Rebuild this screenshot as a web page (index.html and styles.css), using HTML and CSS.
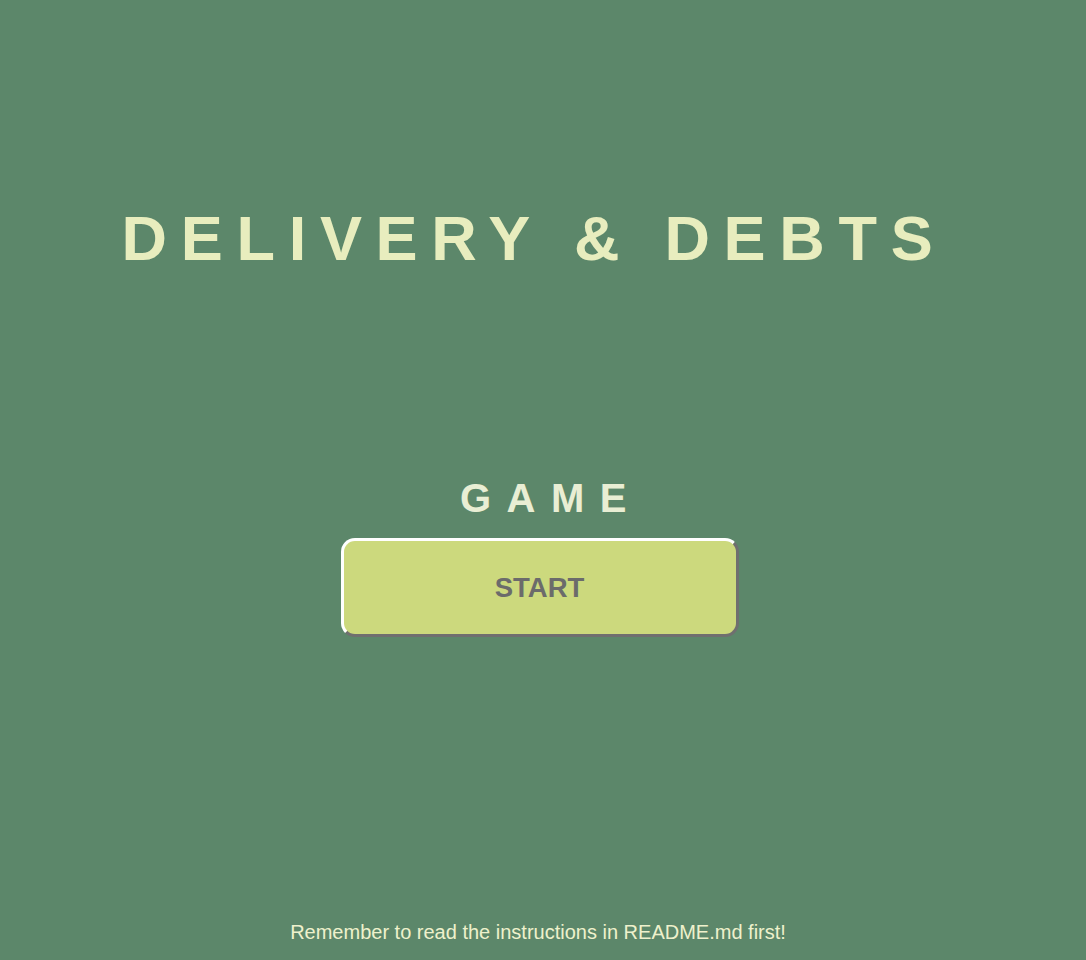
FILE: index.html
```html
<!DOCTYPE html>
<html lang="en">
<head>
<meta charset="utf-8">
<title>Delivery &amp; Debts</title>
<link rel="stylesheet" href="styles.css">
</head>
<body>
<main class="screen">
  <h1 class="title">DELIVERY &amp; DEBTS</h1>
  <h2 class="subtitle">GAME</h2>
  <button class="start-btn" type="button">START</button>
  <p class="note">Remember to read the instructions in README.md first!</p>
</main>
</body>
</html>
```

FILE: styles.css
```css
html, body {
  margin: 0;
  padding: 0;
}

body {
  background: #5c876a;
  font-family: "Liberation Sans", Arial, Helvetica, sans-serif;
}

.screen {
  min-height: 100vh;
  box-sizing: border-box;
  display: flex;
  flex-direction: column;
  align-items: center;
  padding: 207px 0 18px;
}

.title {
  margin: 0;
  font-size: 63px;
  line-height: 1;
  font-weight: 700;
  letter-spacing: 13.7px;
  color: #e8edbe;
  padding-right: 18px;
}

.subtitle {
  margin: 208px 0 0;
  font-size: 40px;
  line-height: 1;
  font-weight: 700;
  letter-spacing: 15.5px;
  padding-left: 16px;
  color: #e9eed4;
}

.start-btn {
  margin: 20px 7px 0 0;
  width: 398px;
  height: 99px;
  box-sizing: border-box;
  background: #ccd97d;
  border: 3px solid;
  border-color: #ffffff #6f6f6f #6f6f6f #ffffff;
  border-radius: 14px;
  font-family: "Liberation Sans", Arial, Helvetica, sans-serif;
  font-size: 27.5px;
  font-weight: 700;
  color: #6b6b6b;
  padding: 0;
}

.note {
  margin: auto 10px 0 0;
  font-size: 20px;
  line-height: 1;
  color: #eef1cc;
}
```
